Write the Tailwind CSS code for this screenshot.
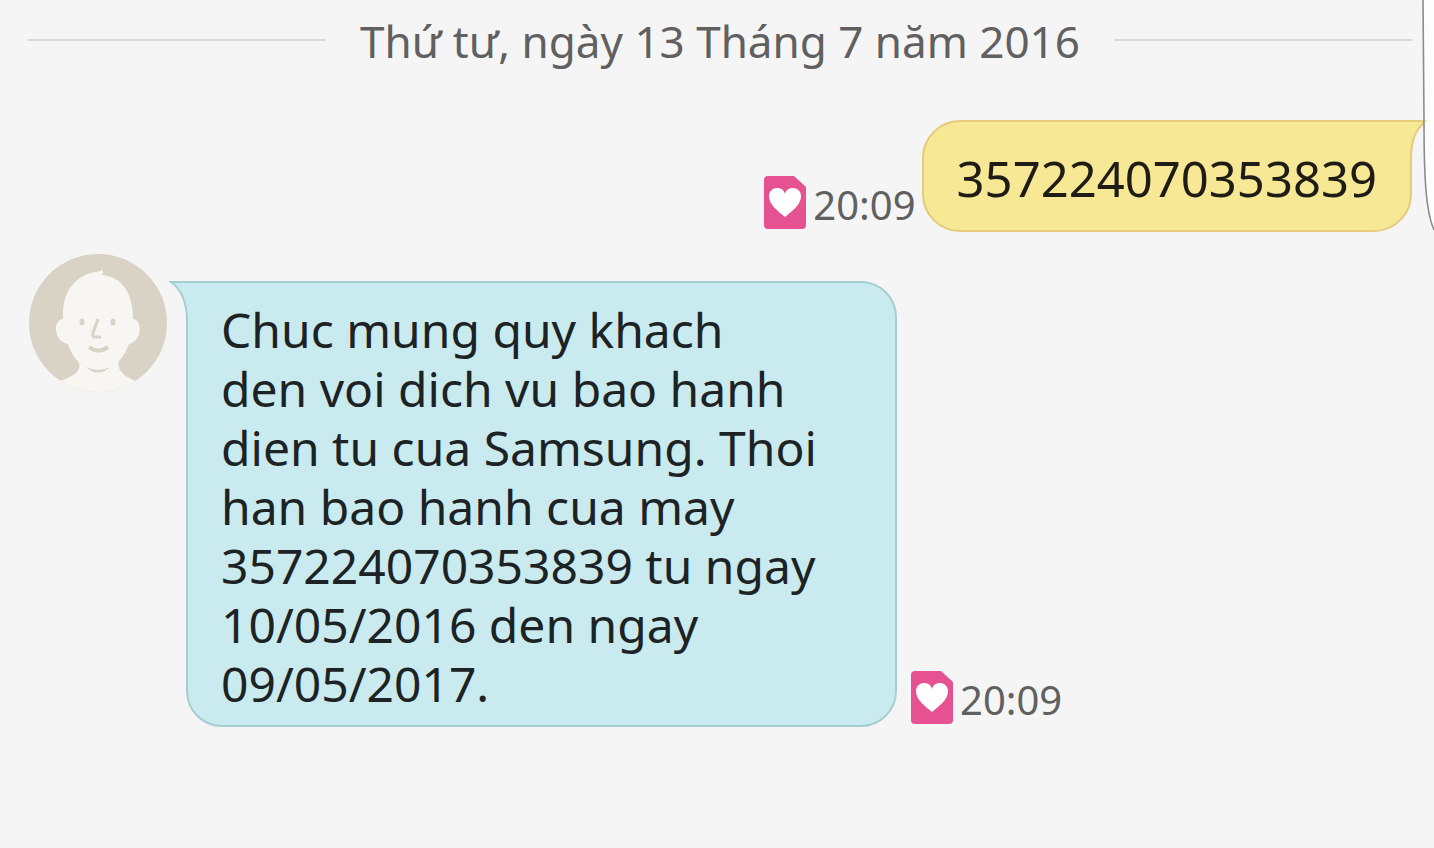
<!DOCTYPE html>
<html lang="vi">
<head>
  <meta charset="UTF-8" />
  <meta name="viewport" content="width=device-width, initial-scale=1.0" />
  <title>Tin nhắn</title>
  <script src="https://cdn.jsdelivr.net/npm/@tailwindcss/browser@4"></script>
</head>
<body class="relative min-h-screen overflow-x-hidden bg-[#f5f5f5] font-['Noto_Sans',sans-serif] text-[#1d2324]">

  <main class="pt-2 pl-7 pr-[22px]">
    <!-- date separator -->
    <div class="flex items-center gap-[34px] text-[#606060]">
      <div class="h-[2px] flex-1 bg-[#d9d9d9]"></div>
      <h1 class="pt-[2px] text-[44px] leading-[62px] whitespace-nowrap">Thứ tư, ngày 13 Tháng 7 năm 2016</h1>
      <div class="h-[2px] flex-1 bg-[#d9d9d9]"></div>
    </div>

    <!-- sent -->
    <div class="mt-12 flex items-end justify-end gap-[6px]">
      <div class="flex items-end gap-[7px] pb-[3px]">
        <svg class="h-[53px] w-[42px]" viewBox="0 0 42 53">
          <path fill="#e65291" d="M4 0H30L42 11V49Q42 53 38 53H4Q0 53 0 49V4Q0 0 4 0Z" />
          <path fill="#fff" d="M21 41C14 35 5 29 5 20C5 15 9 12 13 12C17 12 20 14 21 18C22 14 25 12 29 12C33 12 37 15 37 20C37 29 28 35 21 41Z" />
        </svg>
        <time class="text-[40px] leading-[48px] text-[#606060]">20:09</time>
      </div>
      <div class="relative rounded-[38px] rounded-tr-none border-2 border-[#e5cc7c] bg-[#f7e896] pt-[27px] pr-[33px] pb-[22px] pl-[33px] text-[#1e1c14]">
        <svg class="absolute -top-[2px] -right-[17px] h-[40px] w-[18px]" viewBox="0 0 18 40">
          <path fill="#f7e896" d="M0 0H17C6 9 2 20 2 40H0Z" />
          <path fill="none" stroke="#e5cc7c" stroke-width="2" d="M0 1H17C6 10 2 20 2 40" />
        </svg>
        <p class="text-[49px] leading-[59px]">357224070353839</p>
      </div>
    </div>

    <!-- received -->
    <div class="mt-[21px] flex">
      <svg class="h-[140px] w-[140px] shrink-0" viewBox="0 0 140 140">
        <defs>
          <clipPath id="face"><circle cx="70" cy="70" r="69" /></clipPath>
        </defs>
        <circle cx="70" cy="70" r="69" fill="#d9d3c6" />
        <g clip-path="url(#face)">
          <path fill="#f8f6f3" d="M35 66C34 42 43 25 66 19C70 19 73 18 74 16C75 18 75 20 74 22C95 24 105 41 105 66C115 67 114 88 101 91C98 98 95 104 91 108C88 117 97 124 108 128V140H32V128C43 124 54 119 51 110C46 104 42 98 40 91C26 89 24 67 35 66Z" />
        </g>
        <ellipse cx="54" cy="69" rx="2.5" ry="3.5" fill="#d9d3c6" />
        <ellipse cx="85" cy="69" rx="2.5" ry="3.5" fill="#d9d3c6" />
        <g fill="none" stroke="#d9d3c6" stroke-width="3">
          <path d="M70 66L65 80Q64 84 67 84H73" />
          <path d="M61 94Q70 101 80 94" stroke-width="4" />
        </g>
        <path fill="#d9d3c6" d="M58 114Q70 120 82 114Q70 125 58 114Z" />
      </svg>
      <div class="mt-[28px] ml-[18px] flex flex-1 items-end gap-[14px]">
        <div class="relative max-w-[711px] flex-1 rounded-[36px] rounded-tl-none border-2 border-[#a6ced1] bg-[#c9ebef] pt-[17px] pr-[33px] pb-3 pl-[33px]">
          <svg class="absolute -top-[2px] -left-[19px] h-[40px] w-[20px]" viewBox="0 0 20 40">
            <path fill="#c9ebef" d="M20 0H1C13 9 18 21 18 40H20Z" />
            <path fill="none" stroke="#a6ced1" stroke-width="2" d="M20 1H2C13 9 18 21 18 40" />
          </svg>
          <p class="text-[48px] leading-[59px]">
            Chuc mung quy khach<br />
            den voi dich vu bao hanh<br />
            dien tu cua Samsung. Thoi<br />
            han bao hanh cua may<br />
            357224070353839 tu ngay<br />
            10/05/2016 den ngay<br />
            09/05/2017.
          </p>
        </div>
        <div class="flex items-end gap-[7px] pb-[3px]">
          <svg class="h-[53px] w-[42px]" viewBox="0 0 42 53">
            <path fill="#e65291" d="M4 0H30L42 11V49Q42 53 38 53H4Q0 53 0 49V4Q0 0 4 0Z" />
            <path fill="#fff" d="M21 41C14 35 5 29 5 20C5 15 9 12 13 12C17 12 20 14 21 18C22 14 25 12 29 12C33 12 37 15 37 20C37 29 28 35 21 41Z" />
          </svg>
          <time class="text-[40px] leading-[48px] text-[#606060]">20:09</time>
        </div>
      </div>
    </div>
  </main>

  <!-- edge panel handle -->
  <svg class="absolute top-0 right-0 h-[232px] w-[12px]" viewBox="0 0 12 232">
    <path fill="#fdfdfd" d="M1 0L2 120C2 180 4 212 12 230V0Z" />
    <path fill="none" stroke="#f3e3bd" stroke-width="2" d="M2 121H5" />
    <path fill="none" stroke="#8c8c8c" stroke-width="1.6" d="M1 0L2 120C2 180 4 212 12 230" />
  </svg>
</body>
</html>
